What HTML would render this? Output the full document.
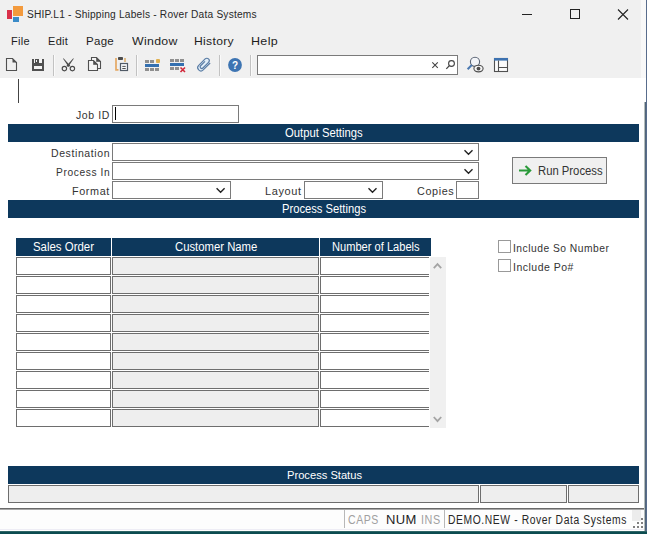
<!DOCTYPE html>
<html><head><meta charset="utf-8">
<style>
*{margin:0;padding:0;box-sizing:border-box}
html,body{width:647px;height:534px;overflow:hidden;background:#fff;font-family:"Liberation Sans",sans-serif}
.a{position:absolute}
.t{white-space:nowrap;line-height:30px;transform-origin:0 0}
.bar{background:#0d385c;height:18px}
.inp{border:1px solid #7a7a7a;background:#fff}
.cell{border:1px solid #6e6e6e;background:#fff;height:18px}
.cell.g{background:#eeeeee}
.cell.nr{border-right:none}
.hdr{background:#0d385c;height:18px;top:238px}
</style></head><body>
<div class="a" style="left:0;top:0;width:641px;height:78px;background:#f0f0f0"></div>
<div class="a" style="left:641px;top:0;width:5px;height:78px;background:#f8f8f8"></div>
<div class="a" style="left:644px;top:102px;width:1px;height:432px;background:#b4bcbc"></div><div class="a" style="left:645px;top:102px;width:1px;height:432px;background:#52667a"></div><div class="a" style="left:646px;top:0;width:1px;height:534px;background:#586c8c"></div>

<div class="a" style="left:7px;top:10px;width:5px;height:9px;background:#d9304a"></div>
<div class="a" style="left:13px;top:6px;width:10px;height:10px;background:#f39a3d"></div>
<div class="a" style="left:13px;top:17px;width:6px;height:5px;background:#3a8bc8"></div>
<div class="a t" style="left:26.98px;top:0px;font-size:10px;color:#282828;letter-spacing:0.2px;transform:scaleX(1.0179);">SHIP.L1 - Shipping Labels - Rover Data Systems</div>

<div class="a" style="left:522px;top:14px;width:10px;height:1px;background:#222"></div>
<div class="a" style="left:570px;top:9px;width:10px;height:10px;border:1px solid #222"></div>
<svg class="a" style="left:617px;top:9px" width="12" height="11" viewBox="0 0 12 11"><path d="M1 0.5 L11 10.5 M11 0.5 L1 10.5" stroke="#222" stroke-width="1.1"/></svg>

<div class="a t" style="left:11.0px;top:26px;font-size:11px;color:#1e1e1e;letter-spacing:0.3px;transform:scaleX(1.0);">File</div>
<div class="a t" style="left:48.0px;top:26px;font-size:11px;color:#1e1e1e;letter-spacing:0.3px;transform:scaleX(1.0);">Edit</div>
<div class="a t" style="left:86.0px;top:26px;font-size:11.5px;color:#1e1e1e;letter-spacing:0.3px;transform:scaleX(1.0);">Page</div>
<div class="a t" style="left:132.0px;top:26px;font-size:11.5px;color:#1e1e1e;letter-spacing:0.3px;transform:scaleX(1.0714);">Window</div>
<div class="a t" style="left:193.94px;top:26px;font-size:11.5px;color:#1e1e1e;letter-spacing:0.3px;transform:scaleX(1.0556);">History</div>
<div class="a t" style="left:250.91px;top:26px;font-size:11.5px;color:#1e1e1e;letter-spacing:0.3px;transform:scaleX(1.087);">Help</div>

<svg class="a" style="left:0;top:52px" width="520" height="26" viewBox="0 52 520 26">
  <path d="M6.5 58.5 H12.5 L16.5 62.5 V70.5 H6.5 Z" fill="none" stroke="#505050" stroke-width="1.1"/>
  <path d="M12.5 58.5 L16.5 62.5 H12.5 Z" fill="#505050"/>
  <rect x="32" y="59" width="12" height="12" fill="#505050"/>
  <rect x="34" y="59" width="8" height="4" fill="#f4f4f4"/>
  <rect x="35" y="59" width="4" height="4" fill="#505050"/>
  <rect x="36" y="60" width="1" height="2" fill="#f4f4f4"/>
  <rect x="34" y="66" width="8" height="3" fill="#f4f4f4"/>
  <circle cx="64.4" cy="68.6" r="2.2" fill="none" stroke="#4a4a4a" stroke-width="1.15"/>
  <circle cx="72.4" cy="68.6" r="2.2" fill="none" stroke="#4a4a4a" stroke-width="1.15"/>
  <path d="M63.07 58.69 L63.53 58.31 L70.28 65.68 L68.72 66.92 Z" fill="#4a4a4a"/>
  <path d="M73.73 58.69 L73.27 58.31 L66.52 65.68 L68.08 66.92 Z" fill="#4a4a4a"/>
  <path d="M91.5 60.5 V57.5 H96.5 L100.5 61.5 V68.5 H97.5" fill="#f4f4f4" stroke="#505050" stroke-width="1.1"/>
  <path d="M96.5 57.5 L100.5 61.5 H96.5 Z" fill="#505050" stroke="#505050" stroke-width="0.6"/>
  <path d="M88.5 60.5 H93.5 L97.5 64.5 V70.5 H88.5 Z" fill="#f4f4f4" stroke="#505050" stroke-width="1.1"/>
  <path d="M93.5 60.5 L97.5 64.5 H93.5 Z" fill="#505050" stroke="#505050" stroke-width="0.6"/>
  <path d="M116 58 V69.8 H118.5" fill="none" stroke="#e4a864" stroke-width="1.7"/>
  <path d="M125 58 V62" fill="none" stroke="#d8a050" stroke-width="1.3"/>
  <rect x="118" y="57" width="5" height="3" rx="0.8" fill="#4d4d4d"/>
  <rect x="120.5" y="63.5" width="7" height="7" fill="#f6f8fa" stroke="#505a66" stroke-width="1.2"/>
  <path d="M122.3 66.4 H125.7 M122.3 68.5 H125.7" stroke="#505050" stroke-width="1"/>
  <rect x="145" y="60" width="4" height="3" fill="#8f8f8f"/><rect x="150" y="60" width="4" height="3" fill="#8f8f8f"/><rect x="156" y="59" width="4" height="4" rx="1" fill="#e0b050"/>
  <rect x="145" y="64" width="14" height="3" fill="#3470b0"/>
  <rect x="145" y="68" width="4" height="3" fill="#8f8f8f"/><rect x="150" y="68" width="4" height="3" fill="#8f8f8f"/><rect x="155" y="68" width="4" height="3" fill="#8f8f8f"/>
  <rect x="170" y="59" width="4" height="3" fill="#8f8f8f"/><rect x="175" y="59" width="4" height="3" fill="#8f8f8f"/><rect x="180" y="59" width="4" height="3" fill="#8f8f8f"/>
  <rect x="170" y="63" width="14" height="3" fill="#3470b0"/>
  <rect x="170" y="67" width="4" height="3" fill="#8f8f8f"/><rect x="175" y="67" width="4" height="3" fill="#8f8f8f"/>
  <path d="M180.5 67.5 L185 72 M185 67.5 L180.5 72" stroke="#d2283a" stroke-width="1.6"/>
  <g transform="translate(204,64.6) rotate(-45)">
    <path d="M5.5 3.2 H-4.3 A3.2 3.2 0 0 1 -4.3 -3.2 H4.8 A2.4 2.4 0 0 1 4.8 1.6 H-3.2 A1.6 1.6 0 0 1 -3.2 -1.6 H3" fill="#e2eef8" stroke="#5a7ca4" stroke-width="1.15"/>
  </g>
  <circle cx="235" cy="65" r="6.9" fill="#3d74b2"/>
  <text x="235" y="69" font-size="10" font-weight="bold" fill="#fff" text-anchor="middle" font-family="Liberation Sans">?</text>
  <rect x="53" y="55" width="1" height="21" fill="#c2c2c2"/><rect x="54" y="55" width="1" height="21" fill="#fafafa"/>
  <rect x="136" y="55" width="1" height="21" fill="#c2c2c2"/><rect x="137" y="55" width="1" height="21" fill="#fafafa"/>
  <rect x="219" y="55" width="1" height="21" fill="#c2c2c2"/><rect x="220" y="55" width="1" height="21" fill="#fafafa"/>
  <rect x="250" y="55" width="1" height="21" fill="#c2c2c2"/><rect x="251" y="55" width="1" height="21" fill="#fafafa"/>
  <rect x="257.5" y="55.5" width="200" height="19" fill="#fff" stroke="#7a7a7a"/>
  <path d="M432.3 62.3 L437.8 67.8 M437.8 62.3 L432.3 67.8" stroke="#444" stroke-width="1.1"/>
  <circle cx="451.5" cy="63.5" r="2.9" fill="none" stroke="#444" stroke-width="1.1"/>
  <path d="M449.4 65.6 L446.3 68.9" stroke="#444" stroke-width="1.3"/>
  <circle cx="475" cy="61.8" r="4.6" fill="#f2f4f8" stroke="#5a6474" stroke-width="1.1"/>
  <path d="M471.8 65 L467.6 69.2" stroke="#4a78b0" stroke-width="2"/>
  <ellipse cx="478.5" cy="68.6" rx="4.6" ry="3.3" fill="#f4f4f4" stroke="#4d4d4d" stroke-width="1.1"/>
  <circle cx="478.5" cy="68.6" r="1.9" fill="#4d4d4d"/>
  <rect x="494.5" y="58.5" width="13" height="13" fill="#fbfbfb" stroke="#505050" stroke-width="1.1"/>
  <rect x="494" y="58" width="14" height="2.6" fill="#3d72b0"/>
  <path d="M498.5 60.5 V71 M498.5 67.5 H507.5" stroke="#505050" stroke-width="1.1"/>
</svg>

<div class="a" style="left:18px;top:79px;width:1px;height:24px;background:#444"></div>

<div class="a t" style="left:76.0px;top:100px;font-size:10.5px;color:#333;letter-spacing:0.6px;transform:scaleX(1.0);">Job ID</div>
<div class="a inp" style="left:112px;top:105px;width:127px;height:18px"></div>
<div class="a" style="left:115px;top:107px;width:1px;height:13px;background:#000"></div>

<div class="a bar" style="left:8px;top:124px;width:631px"></div>
<div class="a t" style="left:285.06px;top:118px;font-size:12px;color:#fff;letter-spacing:0px;transform:scaleX(0.9383);">Output Settings</div>

<div class="a t" style="left:51.0px;top:138px;font-size:10.5px;color:#333;letter-spacing:0.6px;transform:scaleX(1.0);">Destination</div>
<div class="a inp" style="left:112px;top:143px;width:367px;height:18px"></div>
<div class="a t" style="left:55.98px;top:158px;font-size:10px;color:#333;letter-spacing:0.6px;transform:scaleX(1.0196);">Process In</div>
<div class="a inp" style="left:112px;top:162px;width:367px;height:18px"></div>
<div class="a t" style="left:71.97px;top:176px;font-size:10.5px;color:#333;letter-spacing:0.6px;transform:scaleX(1.0286);">Format</div>
<div class="a inp" style="left:112px;top:181px;width:119px;height:18px"></div>
<div class="a t" style="left:265.0px;top:176px;font-size:11px;color:#333;letter-spacing:0.6px;transform:scaleX(1.0);">Layout</div>
<div class="a inp" style="left:304px;top:181px;width:79px;height:18px"></div>
<div class="a t" style="left:416.97px;top:176px;font-size:10.5px;color:#333;letter-spacing:0.6px;transform:scaleX(1.0294);">Copies</div>
<div class="a inp" style="left:456px;top:181px;width:23px;height:18px"></div>

<svg class="a" style="left:0;top:0" width="647" height="534" viewBox="0 0 647 534">
  <path d="M464.5 150.3 L468.5 154.3 L472.5 150.3" fill="none" stroke="#222" stroke-width="1.4"/>
  <path d="M464.5 169.3 L468.5 173.3 L472.5 169.3" fill="none" stroke="#222" stroke-width="1.4"/>
  <path d="M216.6 188.3 L220.6 192.3 L224.6 188.3" fill="none" stroke="#222" stroke-width="1.4"/>
  <path d="M368.5 188.3 L372.5 192.3 L376.5 188.3" fill="none" stroke="#222" stroke-width="1.4"/>
</svg>

<div class="a" style="left:512px;top:157px;width:95px;height:27px;background:#f0f0f0;border:1px solid #7a7a7a"></div>
<svg class="a" style="left:518px;top:164px" width="16" height="13" viewBox="0 0 16 13"><path d="M1 6.5 H12 M7.5 2 L12.2 6.5 L7.5 11" fill="none" stroke="#2a9a3a" stroke-width="2.1"/></svg>
<div class="a t" style="left:538.06px;top:156px;font-size:12px;color:#333;letter-spacing:0px;transform:scaleX(0.9403);">Run Process</div>

<div class="a bar" style="left:8px;top:200px;width:631px"></div>
<div class="a t" style="left:282.07px;top:194px;font-size:12px;color:#fff;letter-spacing:0px;transform:scaleX(0.9326);">Process Settings</div>

<div class="a hdr" style="left:16px;width:95px"></div>
<div class="a hdr" style="left:112px;width:207px"></div>
<div class="a hdr" style="left:320px;width:111px"></div>
<div class="a t" style="left:33.05px;top:232px;font-size:12px;color:#fff;letter-spacing:0px;transform:scaleX(0.9524);">Sales Order</div>
<div class="a t" style="left:175.06px;top:232px;font-size:12px;color:#fff;letter-spacing:0px;transform:scaleX(0.9419);">Customer Name</div>
<div class="a t" style="left:332.08px;top:232px;font-size:12px;color:#fff;letter-spacing:0px;transform:scaleX(0.9247);">Number of Labels</div>
<div class="a cell" style="left:16px;top:257px;width:95px"></div>
<div class="a cell g" style="left:112px;top:257px;width:207px"></div>
<div class="a cell nr" style="left:320px;top:257px;width:109px"></div>
<div class="a cell" style="left:16px;top:276px;width:95px"></div>
<div class="a cell g" style="left:112px;top:276px;width:207px"></div>
<div class="a cell nr" style="left:320px;top:276px;width:109px"></div>
<div class="a cell" style="left:16px;top:295px;width:95px"></div>
<div class="a cell g" style="left:112px;top:295px;width:207px"></div>
<div class="a cell nr" style="left:320px;top:295px;width:109px"></div>
<div class="a cell" style="left:16px;top:314px;width:95px"></div>
<div class="a cell g" style="left:112px;top:314px;width:207px"></div>
<div class="a cell nr" style="left:320px;top:314px;width:109px"></div>
<div class="a cell" style="left:16px;top:333px;width:95px"></div>
<div class="a cell g" style="left:112px;top:333px;width:207px"></div>
<div class="a cell nr" style="left:320px;top:333px;width:109px"></div>
<div class="a cell" style="left:16px;top:352px;width:95px"></div>
<div class="a cell g" style="left:112px;top:352px;width:207px"></div>
<div class="a cell nr" style="left:320px;top:352px;width:109px"></div>
<div class="a cell" style="left:16px;top:371px;width:95px"></div>
<div class="a cell g" style="left:112px;top:371px;width:207px"></div>
<div class="a cell nr" style="left:320px;top:371px;width:109px"></div>
<div class="a cell" style="left:16px;top:390px;width:95px"></div>
<div class="a cell g" style="left:112px;top:390px;width:207px"></div>
<div class="a cell nr" style="left:320px;top:390px;width:109px"></div>
<div class="a cell" style="left:16px;top:409px;width:95px"></div>
<div class="a cell g" style="left:112px;top:409px;width:207px"></div>
<div class="a cell nr" style="left:320px;top:409px;width:109px"></div>
<div class="a" style="left:430px;top:257px;width:16px;height:171px;background:#f0f0f0"></div>
<svg class="a" style="left:430px;top:257px" width="16" height="171" viewBox="0 0 16 171">
  <path d="M3.8 11.2 L7.5 7.2 L11.2 11.2" fill="none" stroke="#a4a4a4" stroke-width="1.8"/>
  <path d="M3.8 160 L7.5 164.2 L11.2 160" fill="none" stroke="#a4a4a4" stroke-width="1.8"/>
</svg>

<div class="a" style="left:498px;top:240px;width:13px;height:13px;border:1px solid #999;background:#fff"></div>
<div class="a t" style="left:513.02px;top:233px;font-size:10.5px;color:#333;letter-spacing:0.5px;transform:scaleX(0.9794);">Include So Number</div>
<div class="a" style="left:498px;top:259px;width:13px;height:13px;border:1px solid #999;background:#fff"></div>
<div class="a t" style="left:513.0px;top:252px;font-size:10.5px;color:#333;letter-spacing:0.5px;transform:scaleX(1.0);">Include Po#</div>

<div class="a bar" style="left:8px;top:466px;width:631px"></div>
<div class="a t" style="left:286.99px;top:460px;font-size:11px;color:#fff;letter-spacing:0px;transform:scaleX(1.0137);">Process Status</div>
<div class="a" style="left:8px;top:485px;width:471px;height:18px;background:#eee;border:1px solid #6e6e6e"></div>
<div class="a" style="left:480px;top:485px;width:87px;height:18px;background:#eee;border:1px solid #6e6e6e"></div>
<div class="a" style="left:568px;top:485px;width:71px;height:18px;background:#eee;border:1px solid #6e6e6e"></div>

<div class="a" style="left:0;top:508px;width:644px;height:1px;background:#6a6a6a"></div>
<div class="a" style="left:0;top:509px;width:644px;height:1px;background:#a8a8a8"></div>
<div class="a" style="left:0;top:510px;width:644px;height:21px;background:#fdfdfd"></div>
<div class="a" style="left:632px;top:510px;width:9px;height:11px;background:#ececec"></div>
<div class="a" style="left:641px;top:518px;width:2px;height:2px;background:#808080"></div>
<div class="a" style="left:637px;top:522px;width:2px;height:2px;background:#808080"></div>
<div class="a" style="left:641px;top:522px;width:2px;height:2px;background:#808080"></div>
<div class="a" style="left:633px;top:526px;width:2px;height:2px;background:#808080"></div>
<div class="a" style="left:637px;top:526px;width:2px;height:2px;background:#808080"></div>
<div class="a" style="left:641px;top:526px;width:2px;height:2px;background:#808080"></div>
<div class="a" style="left:344px;top:510px;width:1px;height:18px;background:#b8b8b8"></div>
<div class="a t" style="left:348.12px;top:505px;font-size:12px;color:#a0a0a0;letter-spacing:0.6px;transform:scaleX(0.8788);">CAPS</div>
<div class="a t" style="left:386.0px;top:505px;font-size:13px;color:#1e1e1e;letter-spacing:0.4px;transform:scaleX(1.0);">NUM</div>
<div class="a t" style="left:421.1px;top:505px;font-size:12px;color:#a0a0a0;letter-spacing:0.6px;transform:scaleX(0.9);">INS</div>
<div class="a" style="left:444px;top:510px;width:1px;height:18px;background:#b8b8b8"></div>
<div class="a t" style="left:448.14px;top:505px;font-size:12px;color:#262626;letter-spacing:0.7px;transform:scaleX(0.8592);">DEMO.NEW - Rover Data Systems</div>
<div class="a" style="left:0;top:529px;width:644px;height:1px;background:#eeedf5"></div><div class="a" style="left:0;top:530px;width:644px;height:1px;background:#fff"></div><div class="a" style="left:0;top:531px;width:647px;height:1px;background:#2f6566"></div><div class="a" style="left:0;top:532px;width:647px;height:2px;background:#0c4c50"></div>
</body></html>
